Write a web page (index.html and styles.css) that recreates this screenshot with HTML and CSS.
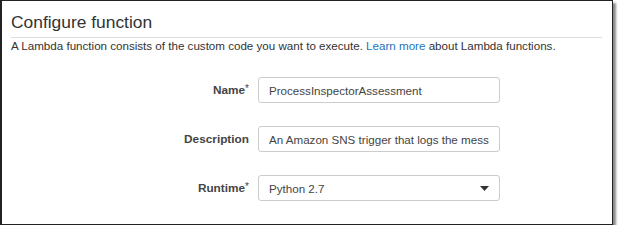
FILE: index.html
```html
<!DOCTYPE html>
<html lang="en">
<head>
    <meta charset="UTF-8">
    <title>Configure function</title>
    <link rel="stylesheet" href="styles.css">
</head>
<body>

<div class="frame">
    <!-- Header -->
    <h2 class="title">Configure function</h2>
    <p class="intro">A Lambda function consists of the custom code you want to execute. <a href="#">Learn more</a> about Lambda functions.</p>

    <!-- Form -->
    <div class="form">
        <label class="label">Name<span class="req">*</span></label>
        <input class="field" type="text" value="ProcessInspectorAssessment">

        <label class="label">Description</label>
        <input class="field" type="text" value="An Amazon SNS trigger that logs the message pushed to the SNS topic.">

        <label class="label">Runtime<span class="req">*</span></label>
        <div class="field select">
            <span>Python 2.7</span>
            <svg width="9" height="5" viewBox="0 0 9 5"><path d="M0 0H9L4.5 5Z" fill="#333"/></svg>
        </div>
    </div>
</div>

</body>
</html>
```

FILE: styles.css
```css
body {
    font-family: "Liberation Sans", Arial, sans-serif;
    margin: 0;
    padding: 0;
    background: white;
}

.frame {
    width: 610px;
    height: 223px;
    border: 1px solid #222;
    border-left-width: 2px;
    box-sizing: content-box;
    background: white;
    box-shadow: 3px 3px 2px rgba(0, 0, 0, 0.45);
}

.title {
    margin: 0 10px 0 9px;
    padding: 10px 0 4px 0;
    font-size: 17.4px;
    font-weight: normal;
    line-height: 22px;
    color: #333;
    border-bottom: 1px solid #ddd;
}

.intro {
    margin: 0 10px 0 9px;
    font-size: 11.6px;
    line-height: 15px;
    color: #333;
}

.intro a {
    color: #2574b9;
    text-decoration: none;
}

.form {
    display: grid;
    grid-template-columns: 239px 242px;
    column-gap: 9px;
    row-gap: 23px;
    align-items: center;
    margin-top: 24px;
    padding-left: 8px;
}

.label {
    text-align: right;
    font-size: 11.8px;
    font-weight: bold;
    color: #444;
}

.req {
    font-weight: normal;
    font-size: 10px;
    vertical-align: top;
}

.field {
    box-sizing: border-box;
    height: 26px;
    width: 242px;
    margin: 0;
    padding: 0 10px;
    border: 1px solid #ccc;
    border-radius: 3px;
    background: white;
    font-family: inherit;
    font-size: 11.6px;
    color: #444;
    outline: none;
}

.select {
    display: flex;
    align-items: center;
    justify-content: space-between;
}
```
